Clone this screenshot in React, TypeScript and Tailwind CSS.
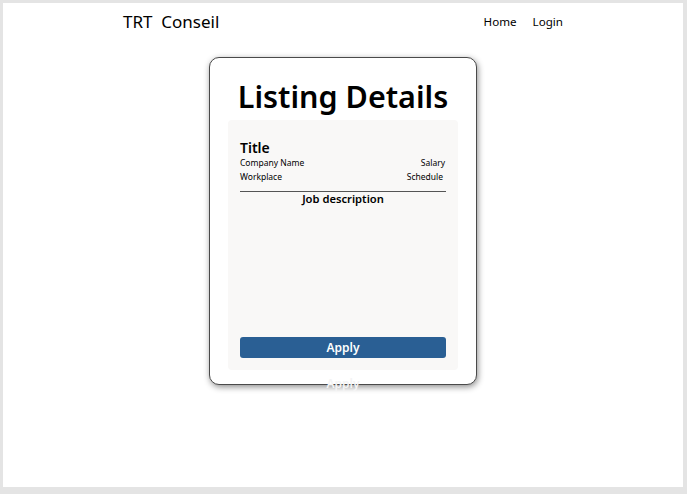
export default function App() {
    return (
        <div className="h-[494px] w-[687px] bg-[#e4e4e4] pt-[3px] pl-[3px] pr-[4px] pb-[7px] font-['Noto_Sans',sans-serif] text-black">
            <div className="h-full w-full bg-white">
                {/* navbar */}
                <nav className="flex items-center justify-between px-[120px] h-[38px]">
                    <span className="text-[17px] whitespace-pre">TRT  Conseil</span>
                    <div className="flex gap-[16px] text-[11.6px]">
                        <a>Home</a>
                        <a>Login</a>
                    </div>
                </nav>

                {/* listing card */}
                <div className="flex justify-center mt-[16px]">
                    <div className="relative w-[268px] h-[328px] rounded-[10px] border border-[#4a4a4a] bg-white shadow-[1px_2px_6px_rgba(0,0,0,0.45)] px-[18px] pb-[14px] flex flex-col">
                        <h1 className="text-[30.5px] font-semibold text-center whitespace-nowrap leading-[40px] mt-[18px] mb-[4px]">Listing Details</h1>
                        <div className="flex-1 rounded-[4px] bg-[#f9f8f7] px-[12px] pt-[20px] pb-[12px] flex flex-col">
                            <h2 className="text-[14px] font-semibold leading-[16px]">Title</h2>
                            <div className="flex justify-between text-[8.5px] leading-[14px]">
                                <span>Company Name</span>
                                <span className="pr-[1px]">Salary</span>
                            </div>
                            <div className="flex justify-between text-[8.5px] leading-[14px]">
                                <span>Workplace</span>
                                <span className="pr-[3px]">Schedule</span>
                            </div>
                            <hr className="mt-[7px] border-t border-[#555]"/>
                            <p className="text-center text-[11.2px] font-semibold leading-[14px]">Job description</p>
                            <div className="flex-1"/>
                            <button className="h-[21px] w-full rounded-[3px] bg-[#2a5f94] text-white text-[12px] font-semibold">
                                Apply
                            </button>
                        </div>
                        {/* stray label that overflows the card */}
                        <span className="absolute left-0 right-0 -bottom-[6px] text-center text-[12px] font-semibold text-[#f4f4f4] leading-none">
                            Apply
                        </span>
                    </div>
                </div>
            </div>
        </div>
    );
}
